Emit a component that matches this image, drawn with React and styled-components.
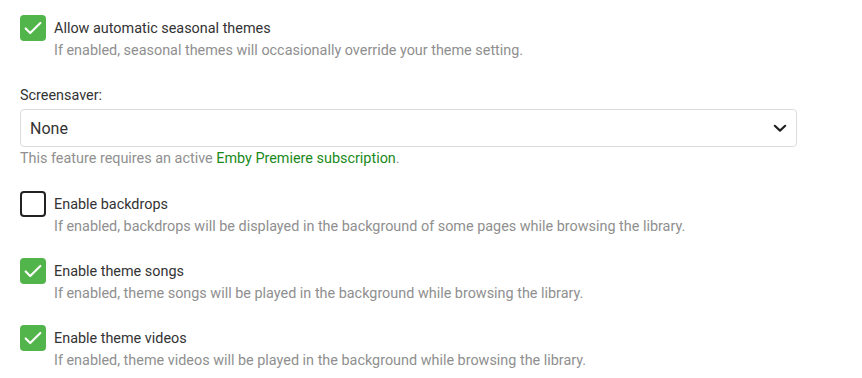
import React from "react";
import styled, { createGlobalStyle } from "styled-components";

const Global = createGlobalStyle`
  html, body { margin: 0; padding: 0; background: #fff; }
  body { font-family: Roboto, "Noto Sans", sans-serif; }
`;

const Page = styled.div`
  padding: 14px 0 0 20px;
  width: 777px;
  display: flex;
  flex-direction: column;
`;

const CheckItem = styled.div`
  display: flex;
  flex-direction: column;
  margin-bottom: ${(p) => p.$mb ?? 20}px;
`;

const CheckRow = styled.label`
  display: flex;
  align-items: center;
  gap: 8px;
  height: 27px;
`;

const Box = styled.span`
  box-sizing: border-box;
  width: 26px;
  height: 26px;
  border-radius: 4px;
  display: flex;
  align-items: center;
  justify-content: center;
  background: ${(p) => (p.$checked ? "#52b54b" : "#fff")};
  border: ${(p) => (p.$checked ? "none" : "2px solid #222")};
  flex-shrink: 0;
`;

const LabelText = styled.span`
  font-size: 14.4px;
  color: #333;
  padding-top: 1px;
`;

const Desc = styled.div`
  font-size: 14.4px;
  color: #8f8f8f;
  padding-left: 34px;
  line-height: 20px;
`;

const FieldLabel = styled.div`
  font-size: 14.4px;
  color: #333;
  line-height: 20px;
  margin-bottom: 3px;
`;

const Select = styled.div`
  box-sizing: border-box;
  height: 38px;
  border: 1px solid #dcdcdc;
  border-radius: 4px;
  display: flex;
  align-items: center;
  justify-content: space-between;
  padding: 0 9px 0 9px;
  font-size: 16px;
  color: #333;
`;

const Help = styled.div`
  font-size: 14.4px;
  color: #8f8f8f;
  margin-top: 2px;
  line-height: 20px;
  margin-bottom: 21px;
`;

const Link = styled.span`
  color: #1b8a1b;
`;

const Check = () => (
  <svg width="22" height="22" viewBox="0 0 24 24" fill="none">
    <path d="M4 12.5l5 5L20 6.5" stroke="#fff" strokeWidth="2.3" strokeLinecap="round" strokeLinejoin="round" />
  </svg>
);

const Chevron = () => (
  <svg width="14" height="10" viewBox="0 0 14 10" fill="none">
    <path d="M1.8 2.8l5.2 4.8 5.2-4.8" stroke="#222" strokeWidth="2.2" strokeLinecap="round" strokeLinejoin="round" />
  </svg>
);

const CheckboxField = ({ checked, label, desc, mb }) => (
  <CheckItem $mb={mb}>
    <CheckRow>
      <Box $checked={checked}>{checked && <Check />}</Box>
      <LabelText>{label}</LabelText>
    </CheckRow>
    <Desc>{desc}</Desc>
  </CheckItem>
);

export default function App() {
  return (
    <>
      <Global />
      <Page>
        <CheckboxField
          checked
          mb={25}
          label="Allow automatic seasonal themes"
          desc="If enabled, seasonal themes will occasionally override your theme setting."
        />
        <FieldLabel>Screensaver:</FieldLabel>
        <Select>
          <span>None</span>
          <Chevron />
        </Select>
        <Help>
          This feature requires an active <Link>Emby Premiere subscription</Link>.
        </Help>
        <CheckboxField
          label="Enable backdrops"
          desc="If enabled, backdrops will be displayed in the background of some pages while browsing the library."
        />
        <CheckboxField
          checked
          label="Enable theme songs"
          desc="If enabled, theme songs will be played in the background while browsing the library."
        />
        <CheckboxField
          checked
          label="Enable theme videos"
          desc="If enabled, theme videos will be played in the background while browsing the library."
        />
      </Page>
    </>
  );
}
